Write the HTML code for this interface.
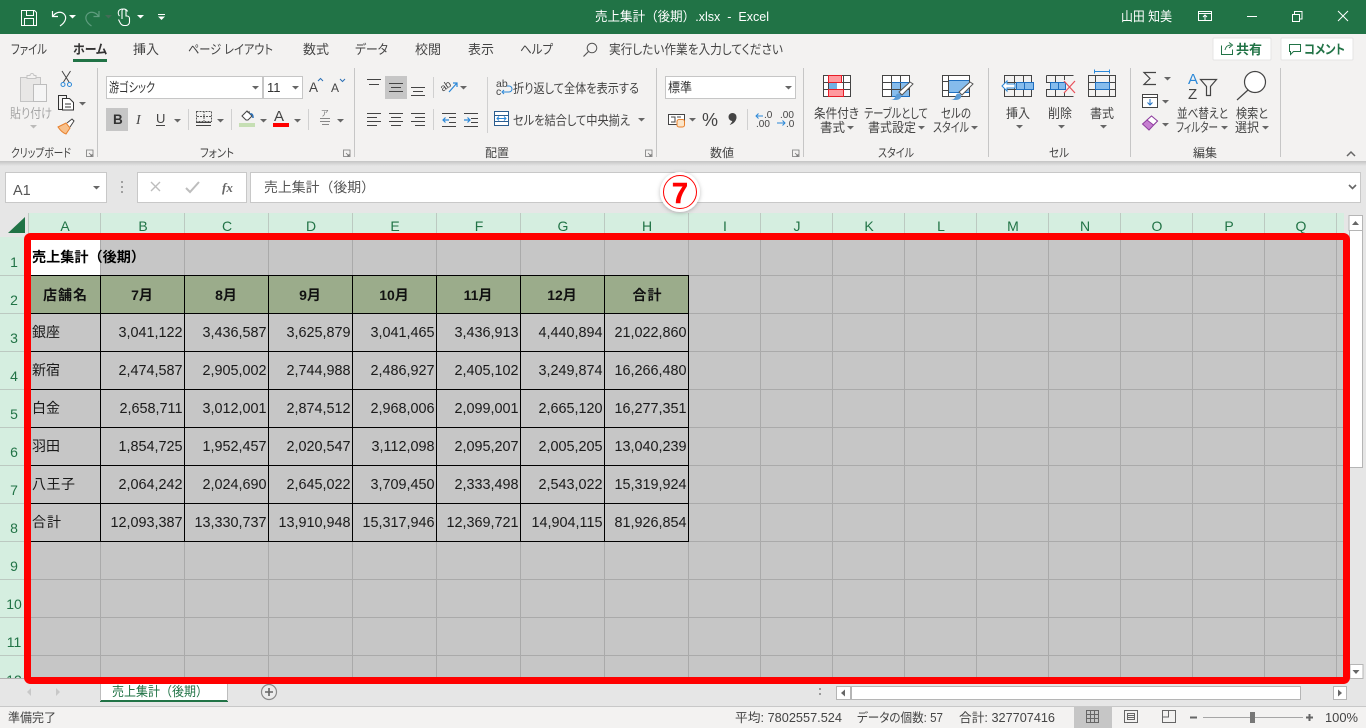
<!DOCTYPE html>
<html lang="ja"><head><meta charset="utf-8"><title>売上集計（後期）.xlsx - Excel</title>
<style>
html,body{margin:0;padding:0;background:#e6e6e6;width:1366px;height:728px;overflow:hidden}
svg{display:block;font-family:"Liberation Sans","Noto Sans CJK JP",sans-serif;font-feature-settings:"palt"}
.np{font-feature-settings:normal}
.r{font-size:13px;fill:#444}
.t{font-size:13px;fill:#444}
.g{font-size:12px;fill:#444}
.n{font-size:14.4px;fill:#1a1a1a;text-anchor:end}
.j{font-size:14px;fill:#1a1a1a}
.h{font-size:14px;fill:#111;font-weight:700;text-anchor:middle}
.c{font-size:14px;fill:#217346;text-anchor:middle}
.w{font-size:13px;fill:#fff}
.s{font-size:12.5px;fill:#444}
</style></head><body>
<svg width="1366" height="728" viewBox="0 0 1366 728" xmlns="http://www.w3.org/2000/svg">
<defs>
<path id="a" d="M0 0h7l-3.500 3.500z" fill="#666"/>
<path id="aw" d="M0 0h7l-3.500 3.500z" fill="#fff"/>
<filter id="sh" x="-40%" y="-40%" width="180%" height="180%"><feDropShadow dx="0" dy="1" stdDeviation="2" flood-color="#000" flood-opacity=".25"/></filter>
<linearGradient id="rs" x1="0" y1="0" x2="0" y2="1"><stop offset="0" stop-color="#c4c4c4"/><stop offset="1" stop-color="#e6e6e6"/></linearGradient>
</defs>

<!-- bands -->
<rect width="1366" height="728" fill="#e6e6e6"/>
<rect y="34" width="1366" height="127" fill="#f3f2f1"/>
<rect y="161" width="1366" height="5" fill="url(#rs)"/>
<rect width="1366" height="34" fill="#217346"/>

<!-- title bar -->
<g fill="none" stroke="#fff" stroke-width="1">
<path d="M21.500 10.500h13l2 2v13h-15zM26.500 10.500v5h7v-5M24.500 25.500v-7h9v7"/>
</g>
<path d="M52.500 11v5.500h5.500M53 16c3-4 8-5 11-2 3 3 2 8-4 12" fill="none" stroke="#fff" stroke-width="1.200"/>
<use href="#aw" x="69" y="15"/>
<path d="M99 11v5.500h-5.500M98.500 16c-3-4-8-5-11-2-3 3-2 8 4 12" fill="none" stroke="#5f9d7f" stroke-width="1.200"/>
<use href="#a" x="105" y="15" style="opacity:.5"/>
<path d="M122 19v-8a2 2 0 0 1 4 0v5h1a2.500 2.500 0 0 1 2.500 2.500v3.500a3.500 3.500 0 0 1-3.500 3.500h-2c-2 0-3-1-4-3l-1.500-3M119.500 16c-1-1-1.500-3-1-4.500.5-2 3-2.500 5-2.500s3.500 1 4 2.500" fill="none" stroke="#fff" stroke-width="1.100"/>
<use href="#aw" x="137" y="15"/>
<path d="M158 14.500h7" stroke="#fff"/><use href="#aw" x="158" y="16.500"/>
<text class="w np" x="595" y="21" textLength="174" lengthAdjust="spacingAndGlyphs">売上集計（後期）.xlsx&#160;&#160;-&#160;&#160;Excel</text>
<text class="w" x="1121" y="21" textLength="51" lengthAdjust="spacingAndGlyphs">山田 知美</text>
<g fill="none" stroke="#fff">
<path d="M1198.500 11.500h13v9h-13zM1198.500 13.500h13M1205 20v-5M1203 17l2-2 2 2"/>
<path d="M1247 16.500h10"/>
<path d="M1292.500 14.500h7v7h-7zM1294.500 14v-2.500h7.500v7.500h-2.500"/>
<path d="M1338 11l10 10M1348 11l-10 10"/>
</g>

<!-- tabs -->
<text class="t" x="11" y="54" textLength="36" lengthAdjust="spacingAndGlyphs">ファイル</text>
<text class="t" x="73" y="54" textLength="34" lengthAdjust="spacingAndGlyphs" font-weight="700" style="fill:#333">ホーム</text>
<rect x="73" y="59" width="34" height="3" fill="#217346"/>
<text class="t" x="133" y="54" textLength="26" lengthAdjust="spacingAndGlyphs">挿入</text>
<text class="t" x="188" y="54" textLength="85" lengthAdjust="spacingAndGlyphs">ページ レイアウト</text>
<text class="t" x="303" y="54" textLength="26" lengthAdjust="spacingAndGlyphs">数式</text>
<text class="t" x="355" y="54" textLength="33" lengthAdjust="spacingAndGlyphs">データ</text>
<text class="t" x="415" y="54" textLength="26" lengthAdjust="spacingAndGlyphs">校閲</text>
<text class="t" x="468" y="54" textLength="26" lengthAdjust="spacingAndGlyphs">表示</text>
<text class="t" x="520" y="54" textLength="33" lengthAdjust="spacingAndGlyphs">ヘルプ</text>
<circle cx="592" cy="48" r="4.800" fill="none" stroke="#555"/><path d="M588.500 51.500l-5 5" stroke="#555" stroke-width="1.200"/>
<text class="t" x="609" y="54" textLength="174" lengthAdjust="spacingAndGlyphs">実行したい作業を入力してください</text>

<rect x="1213" y="38" width="58" height="22" rx="1" fill="#fff" stroke="#e4e4e4"/>
<path d="M1221.500 45.500v9h11v-5M1225 50c1-4 3-5 6-5M1229 42.500l3.500 2.500-3.500 3" fill="none" stroke="#217346"/>
<text x="1236" y="54" font-size="13" font-weight="700" fill="#217346" textLength="26" lengthAdjust="spacingAndGlyphs">共有</text>
<rect x="1281" y="38" width="72" height="22" rx="1" fill="#fff" stroke="#e4e4e4"/>
<path d="M1289.500 44.500h11v7h-7l-3 3v-3h-1z" fill="none" stroke="#217346"/>
<text x="1304" y="54" font-size="13" font-weight="700" fill="#217346" textLength="41" lengthAdjust="spacingAndGlyphs">コメント</text>

<!-- group separators -->
<path d="M97.500 68v89M354.500 68v89M656.500 68v89M803.500 68v89M988.500 68v89M1130.500 68v89M1280.500 68v89" stroke="#c6c6c6"/>
<path d="M188.500 109v21M231.500 109v21M308.500 109v21M433.500 77v21M433.500 109v21M487.500 77v56M747.500 109v21" stroke="#d0d0d0"/>

<!-- group labels -->
<text class="g" x="11" y="157" textLength="60" lengthAdjust="spacingAndGlyphs">クリップボード</text>
<text class="g" x="200" y="157" textLength="34" lengthAdjust="spacingAndGlyphs">フォント</text>
<text class="g" x="485" y="157" textLength="24" lengthAdjust="spacingAndGlyphs">配置</text>
<text class="g" x="710" y="157" textLength="24" lengthAdjust="spacingAndGlyphs">数値</text>
<text class="g" x="878" y="157" textLength="36" lengthAdjust="spacingAndGlyphs">スタイル</text>
<text class="g" x="1049" y="157" textLength="20" lengthAdjust="spacingAndGlyphs">セル</text>
<text class="g" x="1193" y="157" textLength="24" lengthAdjust="spacingAndGlyphs">編集</text>
<g fill="none" stroke="#777" stroke-width=".8">
<path d="M86 150h7v7M86.500 150.500v6h6M89 153l3 3M90 156h2v-2"/>
<path d="M343 150h7v7M343.500 150.500v6h6M346 153l3 3M347 156h2v-2"/>
<path d="M645 150h7v7M645.500 150.500v6h6M648 153l3 3M649 156h2v-2"/>
<path d="M792 150h7v7M792.500 150.500v6h6M795 153l3 3M796 156h2v-2"/>
</g>
<path d="M1347 156l4-4 4 4" fill="none" stroke="#666" stroke-width="1.500"/>

<!-- clipboard -->
<path d="M20.500 77.500h20v24h-20z" fill="#e8e7e6" stroke="#c4c4c4"/>
<path d="M27 77.500v-2h3a2 2 0 0 1 4 0h2v3h-9z" fill="#f3f2f1" stroke="#c4c4c4"/>
<rect x="33.500" y="84.500" width="13" height="17" fill="#f5f5f5" stroke="#bdbdbd"/>
<text x="10" y="118" font-size="13" fill="#a6a6a6" textLength="42" lengthAdjust="spacingAndGlyphs">貼り付け</text>
<use href="#a" x="30" y="125" style="opacity:.4"/>
<path d="M62 71l7 11M70.500 71l-7 11" stroke="#444" fill="none"/>
<circle cx="63" cy="84.500" r="2" fill="none" stroke="#2b88d8"/><circle cx="69.500" cy="84.500" r="2" fill="none" stroke="#2b88d8"/>
<path d="M62.500 109.500h-4v-14h8v3" fill="none" stroke="#333"/>
<path d="M62.500 98.500h7l4 4v7.500h-11zM65 104h6M65 107h6" fill="#fff" stroke="#333" stroke-width="1"/>
<use href="#a" x="79" y="102"/>
<path d="M58 127l8-4 4 5-4 6c-3-1-6-4-8-7z" fill="#f8c08a" stroke="#e8802c"/>
<path d="M67 123l5-4 2 2-4 6" fill="#fff" stroke="#444"/>

<!-- font -->
<rect x="106.500" y="76.500" width="156" height="22" fill="#fff" stroke="#c6c6c6"/>
<rect x="263.500" y="76.500" width="39" height="22" fill="#fff" stroke="#c6c6c6"/>
<text x="109" y="92" font-size="13" fill="#333" textLength="46" lengthAdjust="spacingAndGlyphs">游ゴシック</text>
<text x="267" y="92" font-size="13" fill="#333">11</text>
<use href="#a" x="252" y="86"/><use href="#a" x="292" y="86"/>
<text x="309" y="92" font-size="13.500" fill="#444">A</text><path d="M318 81l2.500-2.500 2.500 2.500" fill="none" stroke="#2b6fb5"/>
<text x="331" y="92" font-size="12" fill="#444">A</text><path d="M340 79l2.500 2.500 2.500-2.500" fill="none" stroke="#2b6fb5"/>
<rect x="106" y="108" width="22" height="23" fill="#c6c6c6"/>
<text x="113" y="124" font-size="13.500" font-weight="700" fill="#333">B</text>
<text x="136" y="124" font-size="14" font-style="italic" fill="#444" font-family="Liberation Serif">I</text>
<text x="156" y="123" font-size="13" fill="#444">U</text><path d="M156 125.500h9" stroke="#444"/>
<use href="#a" x="174" y="119"/>
<path d="M196.500 111.500h15v10h-15zM204 111v10M197 116.500h14" fill="none" stroke="#555" stroke-dasharray="2 1"/>
<path d="M196 122.500h15M196 125.500h15" stroke="#444"/>
<use href="#a" x="217" y="119"/>
<path d="M242 116l5-5 5 5-4 4h-2zM247 112l3 0" fill="#fff" stroke="#444"/><path d="M250 114c3-1 3 3 3 4" fill="none" stroke="#2b6fb5" stroke-width="1.500"/>
<rect x="239" y="123" width="16" height="4" fill="#c6dfb4"/>
<use href="#a" x="260" y="119"/>
<text x="274" y="121" font-size="15" fill="#444">A</text>
<rect x="273" y="123" width="16" height="4" fill="#f00"/>
<use href="#a" x="294" y="119"/>
<text x="321" y="116" font-size="8" fill="#777">ア</text>
<path d="M320 118.500h10M320 121.500h10M322 124.500h7" stroke="#888"/>
<use href="#a" x="337" y="119"/>

<!-- alignment -->
<rect x="385" y="76" width="22" height="23" fill="#c6c6c6"/>
<g stroke="#444">
<path d="M367 79.500h14M369 84.500h10"/>
<path d="M389 83.500h14M391 87.500h10M389 91.500h14"/>
<path d="M411 87.500h14M413 91.500h10M411 95.500h14"/>
<path d="M367 113.500h14M367 117.500h10M367 121.500h14M367 125.500h10"/>
<path d="M389 113.500h14M391 117.500h10M389 121.500h14M391 125.500h10"/>
<path d="M411 113.500h14M415 117.500h10M411 121.500h14M415 125.500h10"/>
<path d="M442 113.500h14M449 117.500h7M449 122.500h7M442 126.500h14"/>
<path d="M464 113.500h14M471 118.500h7M471 122.500h7M464 126.500h14"/>
</g>
<path d="M449 120h-6M445.500 117.500l-2.500 2.500 2.500 2.500" fill="none" stroke="#2b88d8" stroke-width="1.200"/>
<path d="M464 120h6M467.500 117.500l2.500 2.500-2.500 2.500" fill="none" stroke="#2b88d8" stroke-width="1.200"/>
<text x="441" y="90" font-size="10" fill="#444" transform="rotate(-35 445 88)">ab</text>
<path d="M449 92l8-9M453 83h4v4" fill="none" stroke="#2b88d8" stroke-width="1.200"/>
<use href="#a" x="460" y="86"/>
<text x="496" y="87" font-size="10.500" fill="#444">ab</text><text x="496" y="95" font-size="10.500" fill="#444">c</text>
<path d="M503 92h6a2.500 2.500 0 0 0 0-6h-2M504 90l-2 2 2 2" fill="none" stroke="#2b88d8"/>
<text class="r" x="513" y="93" textLength="126" lengthAdjust="spacingAndGlyphs">折り返して全体を表示する</text>
<rect x="494.500" y="111.500" width="14" height="14" fill="#fff" stroke="#2a5d8f"/><path d="M495 115.500h14M495 121.500h14" stroke="#2a5d8f"/>
<path d="M497 118.500h9M499 116.500l-2 2 2 2M504 116.500l2 2-2 2" fill="none" stroke="#2b88d8"/>
<text class="r" x="513" y="125" textLength="117" lengthAdjust="spacingAndGlyphs">セルを結合して中央揃え</text>
<use href="#a" x="638" y="118"/>

<!-- number -->
<rect x="665.500" y="76.500" width="130" height="22" fill="#fff" stroke="#c6c6c6"/>
<text x="668" y="92" font-size="13" fill="#333" textLength="24" lengthAdjust="spacingAndGlyphs">標準</text>
<use href="#a" x="785" y="86"/>
<rect x="668.500" y="114.500" width="16" height="10" fill="#fff" stroke="#444"/>
<path d="M671 117h4v5h-4M677 117h4" fill="none" stroke="#444"/>
<rect x="677" y="119.500" width="7.500" height="7.500" rx="2" fill="#fbe5c9" stroke="#e8802c"/>
<use href="#a" x="689" y="118"/>
<text x="702" y="126" font-size="18" fill="#444">%</text>
<circle cx="732.500" cy="117" r="4" fill="#444"/><path d="M736.500 117c0 4-3 7-7 8 2-2 3-4 3-5z" fill="#444"/>
<text x="764" y="118" font-size="10" fill="#444">.0</text><text x="756" y="127" font-size="10" fill="#444">.00</text>
<path d="M763 116h-7M758.500 113.500l-2.500 2.500 2.500 2.500" fill="none" stroke="#2b88d8"/>
<text x="780" y="118" font-size="10" fill="#444">.00</text><text x="786" y="127" font-size="10" fill="#444">.0</text>
<path d="M777 123h8M782.500 120.500l2.500 2.500-2.500 2.500" fill="none" stroke="#2b88d8"/>

<!-- conditional -->
<rect x="824" y="76" width="26" height="20" fill="#fff"/>
<path d="M823.500 75.500h27v21h-27zM823.500 82.500h27M823.500 89.500h27M828.500 75v22M843.500 75v22" fill="none" stroke="#444"/>
<rect x="828.500" y="75.500" width="13" height="7" fill="#ff9a9f" stroke="#e61e28"/>
<rect x="829" y="83" width="8" height="6" fill="#74b1e5"/>
<rect x="828.500" y="89.500" width="15" height="7" fill="#ff9a9f" stroke="#e61e28"/>
<!-- table -->
<rect x="882" y="76" width="28" height="20" fill="#fff"/>
<rect x="892" y="82.500" width="18" height="14" fill="#86bcec"/>
<path d="M882.500 75.500h27v21h-27zM882.500 82.500h27M882.500 89.500h27M891.500 75v22M900.500 75v22" fill="none" stroke="#444"/>
<path d="M892 82.500h18M892 96.500h18" stroke="#1f6fc0"/>
<path d="M910 82l3 2-11 11-3-3z" fill="#fff" stroke="#555"/>
<path d="M890 100c4 0 5-2 6-5 1-2 4-2 5 0 1 3-2 5-5 5z" fill="#5b9bd5"/>
<!-- cell style -->
<rect x="942" y="76" width="28" height="20" fill="#fff"/>
<rect x="948.500" y="80.500" width="21" height="12" fill="#86bcec" stroke="#1f6fc0"/>
<path d="M942.500 75.500h27v21h-27zM948.500 75v22M942.500 81.500h6M942.500 90.500h6" fill="none" stroke="#444"/>
<path d="M970 82l3 2-11 11-3-3z" fill="#fff" stroke="#555"/>
<path d="M950 100c4 0 5-2 6-5 1-2 4-2 5 0 1 3-2 5-5 5z" fill="#5b9bd5"/>
<text class="r" x="814" y="118" textLength="45" lengthAdjust="spacingAndGlyphs">条件付き</text>
<text class="r" x="820" y="132" textLength="25" lengthAdjust="spacingAndGlyphs">書式</text><use href="#a" x="847" y="126" />
<text class="r" x="864" y="118" textLength="64" lengthAdjust="spacingAndGlyphs">テーブルとして</text>
<text class="r" x="868" y="132" textLength="48" lengthAdjust="spacingAndGlyphs">書式設定</text><use href="#a" x="918" y="126"/>
<text class="r" x="941" y="118" textLength="30" lengthAdjust="spacingAndGlyphs">セルの</text>
<text class="r" x="933" y="132" textLength="36" lengthAdjust="spacingAndGlyphs">スタイル</text><use href="#a" x="971" y="126"/>

<!-- cells group -->
<g fill="none" stroke="#444">
<path d="M1004.500 75.500h27v21h-27zM1004.500 82.500h27M1004.500 89.500h27M1014.500 75v21M1023.500 75v21"/>
<path d="M1046.500 75.500h27M1046.500 96.500h27M1046.500 75.500v7M1046.500 89.500v7M1046 82.500h5M1046 89.500h5M1055.500 75v7M1064.500 75v5M1055.500 90v7M1064.500 92v5"/>
<path d="M1088.500 75.500h27v21h-27zM1088.500 82.500h27M1088.500 89.500h27M1095.500 75v22M1109.500 75v22"/>
</g>
<rect x="1016.500" y="82.500" width="17" height="7" fill="#86bcec" stroke="#1f6fc0"/><path d="M1024.500 82v8" stroke="#1f6fc0"/>
<path d="M1002 86l5-5v3h8v4h-8v3z" fill="#fff" stroke="#2b88d8"/>
<rect x="1050.500" y="82.500" width="15" height="7" fill="#86bcec" stroke="#1f6fc0"/><path d="M1058.500 82v8" stroke="#1f6fc0"/>
<path d="M1064 81l11 12M1075 81l-11 12" stroke="#e8505a" stroke-width="1.200"/>
<path d="M1094 71.500h16M1094.500 69.500v4M1109.500 69.500v4" stroke="#2b88d8"/>
<rect x="1095.500" y="82.500" width="14" height="7" fill="#86bcec" stroke="#1f6fc0"/>
<text class="r" x="1006" y="118" textLength="24" lengthAdjust="spacingAndGlyphs">挿入</text><use href="#a" x="1016" y="125"/>
<text class="r" x="1048" y="118" textLength="24" lengthAdjust="spacingAndGlyphs">削除</text><use href="#a" x="1058" y="125"/>
<text class="r" x="1090" y="118" textLength="24" lengthAdjust="spacingAndGlyphs">書式</text><use href="#a" x="1100" y="125"/>

<!-- edit -->
<path d="M1156 72.500h-12l6 6-6 6h12" fill="none" stroke="#444" stroke-width="1.200"/>
<use href="#a" x="1164" y="77"/>
<rect x="1142.500" y="94.500" width="15" height="13" fill="#fff" stroke="#444"/><path d="M1142 97.500h16" stroke="#444"/>
<path d="M1150 99v6M1147.500 102.500l2.500 2.500 2.500-2.500" fill="none" stroke="#1f6fc0"/>
<use href="#a" x="1162" y="100"/>
<path d="M1142.500 124l9-8 6 5-8.500 9z" fill="#c67fd1" stroke="#8f3f9f"/><path d="M1147 120l4.500-4 6 5-4 4z" fill="#fff" stroke="#8f3f9f"/>
<use href="#a" x="1162" y="123"/>
<text x="1188" y="84" font-size="15" fill="#2b88d8">A</text>
<text x="1188" y="99" font-size="15" fill="#444">Z</text>
<path d="M1200.500 79.500h16l-6 7v9h-4v-9z" fill="none" stroke="#444" stroke-width="1.200"/>
<circle cx="1255" cy="82" r="10.500" fill="#fff" stroke="#444" stroke-width="1.200"/>
<path d="M1248 90l-11 10" stroke="#444" stroke-width="1.200"/>
<text class="r" x="1177" y="118" textLength="51" lengthAdjust="spacingAndGlyphs">並べ替えと</text>
<text class="r" x="1176" y="132" textLength="42" lengthAdjust="spacingAndGlyphs">フィルター</text><use href="#a" x="1221" y="126"/>
<text class="r" x="1236" y="118" textLength="32" lengthAdjust="spacingAndGlyphs">検索と</text>
<text class="r" x="1235" y="132" textLength="24" lengthAdjust="spacingAndGlyphs">選択</text><use href="#a" x="1262" y="126"/>

<!-- formula bar -->
<rect x="5.500" y="172.500" width="101" height="30" fill="#fff" stroke="#c8c8c8"/>
<text x="13" y="195" font-size="14.500" fill="#555">A1</text>
<use href="#a" x="93" y="186"/>
<path d="M122 181v2M122 186v2M122 191v2" stroke="#a0a0a0" stroke-width="2"/>
<rect x="137.500" y="172.500" width="109" height="30" fill="#fff" stroke="#c8c8c8"/>
<path d="M151 182l9 9M160 182l-9 9" stroke="#bdbdbd" stroke-width="1.400"/>
<path d="M186 188l4 4 9-10" fill="none" stroke="#bdbdbd" stroke-width="2"/>
<text x="222" y="192" font-size="13" font-style="italic" font-weight="700" font-family="Liberation Serif" fill="#666">fx</text>
<rect x="250.500" y="172.500" width="1110" height="30" fill="#fff" stroke="#c8c8c8"/>
<text class="np" x="264" y="192" font-size="13.500" fill="#555" textLength="111" lengthAdjust="spacingAndGlyphs">売上集計（後期）</text>
<path d="M1349 185l3.500 3.500 3.500-3.500" fill="none" stroke="#666" stroke-width="1.600"/>

<!-- headers -->
<rect x="0" y="213" width="1344" height="25" fill="#d5eee0"/>
<rect x="0" y="238" width="29" height="440" fill="#d5eee0"/>
<rect x="0" y="213" width="29" height="24" fill="#e6e6e6"/>
<path d="M8 233L25 217V233z" fill="#217346"/>
<path d="M28.500 213v24M100.500 213v24M184.500 213v24M268.500 213v24M352.500 213v24M436.500 213v24M520.500 213v24M604.500 213v24M688.500 213v24M760.500 213v24M832.500 213v24M904.500 213v24M976.500 213v24M1048.500 213v24M1120.500 213v24M1192.500 213v24M1264.500 213v24M1336.500 213v24" stroke="#bcc9c1"/>
<text class="c" x="65" y="231">A</text><text class="c" x="143" y="231">B</text><text class="c" x="227" y="231">C</text><text class="c" x="311" y="231">D</text><text class="c" x="395" y="231">E</text><text class="c" x="479" y="231">F</text><text class="c" x="563" y="231">G</text><text class="c" x="647" y="231">H</text><text class="c" x="725" y="231">I</text><text class="c" x="797" y="231">J</text><text class="c" x="869" y="231">K</text><text class="c" x="941" y="231">L</text><text class="c" x="1013" y="231">M</text><text class="c" x="1085" y="231">N</text><text class="c" x="1157" y="231">O</text><text class="c" x="1229" y="231">P</text><text class="c" x="1301" y="231">Q</text>
<text class="c" x="14" y="267">1</text><text class="c" x="14" y="305">2</text><text class="c" x="14" y="343">3</text><text class="c" x="14" y="381">4</text><text class="c" x="14" y="419">5</text><text class="c" x="14" y="457">6</text><text class="c" x="14" y="495">7</text><text class="c" x="14" y="533">8</text><text class="c" x="14" y="571">9</text><text class="c" x="14" y="609">10</text><text class="c" x="14" y="647">11</text><text class="c" x="14" y="685">12</text>
<path d="M0 275.500h24M0 313.500h24M0 351.500h24M0 389.500h24M0 427.500h24M0 465.500h24M0 503.500h24M0 541.500h24M0 579.500h24M0 617.500h24M0 655.500h24" stroke="#bcc9c1"/>
<rect x="0" y="678" width="24" height="6" fill="#e6e6e6"/>
<path d="M0 678.500h24" stroke="#b0b0b0"/>

<!-- cells -->
<rect x="29" y="238" width="1315" height="446" fill="#c6c6c6"/>
<path d="M100.500 238V684M184.500 238V684M268.500 238V684M352.500 238V684M436.500 238V684M520.500 238V684M604.500 238V684M688.500 238V684M760.500 238V684M832.500 238V684M904.500 238V684M976.500 238V684M1048.500 238V684M1120.500 238V684M1192.500 238V684M1264.500 238V684M1336.500 238V684M29 275.500H1344M29 313.500H1344M29 351.500H1344M29 389.500H1344M29 427.500H1344M29 465.500H1344M29 503.500H1344M29 541.500H1344M29 579.500H1344M29 617.500H1344M29 655.500H1344" stroke="#aaa"/>
<rect x="29" y="238" width="71" height="37" fill="#fff"/>
<rect x="29" y="276" width="660" height="37" fill="#9bac8b"/>
<path d="M100.500 275V542M184.500 275V542M268.500 275V542M352.500 275V542M436.500 275V542M520.500 275V542M604.500 275V542M688.500 275V542M29 275.500H689M29 313.500H689M29 351.500H689M29 389.500H689M29 427.500H689M29 465.500H689M29 503.500H689M29 541.500H689" stroke="#000"/>

<text class="np" x="32" y="262" font-size="14" font-weight="700" fill="#000" textLength="113" lengthAdjust="spacingAndGlyphs">売上集計（後期）</text>
<text class="h" x="65" y="300" textLength="44" lengthAdjust="spacing">店舗名</text><text class="h" x="142" y="300">7月</text><text class="h" x="226" y="300">8月</text><text class="h" x="310" y="300">9月</text><text class="h" x="394" y="300">10月</text><text class="h" x="478" y="300">11月</text><text class="h" x="562" y="300">12月</text><text class="h" x="647" y="300" textLength="29" lengthAdjust="spacing">合計</text>

<text class="j" x="32" y="337" textLength="28" lengthAdjust="spacing">銀座</text>
<text class="n" x="182.500" y="337">3,041,122</text><text class="n" x="266.500" y="337">3,436,587</text><text class="n" x="350.500" y="337">3,625,879</text><text class="n" x="434.500" y="337">3,041,465</text><text class="n" x="518.500" y="337">3,436,913</text><text class="n" x="602.500" y="337">4,440,894</text><text class="n" x="686.500" y="337">21,022,860</text>
<text class="j" x="32" y="375" textLength="28" lengthAdjust="spacing">新宿</text>
<text class="n" x="182.500" y="375">2,474,587</text><text class="n" x="266.500" y="375">2,905,002</text><text class="n" x="350.500" y="375">2,744,988</text><text class="n" x="434.500" y="375">2,486,927</text><text class="n" x="518.500" y="375">2,405,102</text><text class="n" x="602.500" y="375">3,249,874</text><text class="n" x="686.500" y="375">16,266,480</text>
<text class="j" x="32" y="413" textLength="28" lengthAdjust="spacing">白金</text>
<text class="n" x="182.500" y="413">2,658,711</text><text class="n" x="266.500" y="413">3,012,001</text><text class="n" x="350.500" y="413">2,874,512</text><text class="n" x="434.500" y="413">2,968,006</text><text class="n" x="518.500" y="413">2,099,001</text><text class="n" x="602.500" y="413">2,665,120</text><text class="n" x="686.500" y="413">16,277,351</text>
<text class="j" x="32" y="451" textLength="28" lengthAdjust="spacing">羽田</text>
<text class="n" x="182.500" y="451">1,854,725</text><text class="n" x="266.500" y="451">1,952,457</text><text class="n" x="350.500" y="451">2,020,547</text><text class="n" x="434.500" y="451">3,112,098</text><text class="n" x="518.500" y="451">2,095,207</text><text class="n" x="602.500" y="451">2,005,205</text><text class="n" x="686.500" y="451">13,040,239</text>
<text class="j" x="32" y="489" textLength="43" lengthAdjust="spacing">八王子</text>
<text class="n" x="182.500" y="489">2,064,242</text><text class="n" x="266.500" y="489">2,024,690</text><text class="n" x="350.500" y="489">2,645,022</text><text class="n" x="434.500" y="489">3,709,450</text><text class="n" x="518.500" y="489">2,333,498</text><text class="n" x="602.500" y="489">2,543,022</text><text class="n" x="686.500" y="489">15,319,924</text>
<text class="j" x="32" y="527" textLength="29" lengthAdjust="spacing">合計</text>
<text class="n" x="182.500" y="527">12,093,387</text><text class="n" x="266.500" y="527">13,330,737</text><text class="n" x="350.500" y="527">13,910,948</text><text class="n" x="434.500" y="527">15,317,946</text><text class="n" x="518.500" y="527">12,369,721</text><text class="n" x="602.500" y="527">14,904,115</text><text class="n" x="686.500" y="527">81,926,854</text>

<!-- vertical scrollbar -->
<rect x="1344" y="213" width="22" height="471" fill="#e6e6e6"/>
<rect x="1349" y="215.500" width="13.500" height="15" fill="#fff" stroke="#b5b5b5"/>
<path d="M1352 225l3.500-4 3.500 4z" fill="#666"/>
<rect x="1349" y="231" width="14" height="236" fill="#fff"/>
<path d="M1349.500 231v236M1362.500 231v236M1349 467.500h14" stroke="#b5b5b5"/>
<rect x="1350" y="664.500" width="13" height="14" fill="#fff" stroke="#b5b5b5"/>
<path d="M1352.500 670l3.500 4 3.500-4z" fill="#666"/>

<!-- sheet tabs -->
<rect x="0" y="684" width="1366" height="22" fill="#e6e6e6"/>
<path d="M31 688l-4 4 4 4zM56 688l4 4-4 4z" fill="#c8c8c8"/>
<rect x="100" y="684" width="128" height="18" fill="#fff"/>
<rect x="100" y="700" width="128" height="2" fill="#217346"/>
<path d="M100.500 684v17M227.500 684v17" stroke="#bdbdbd"/>
<text class="np" x="112" y="696" font-size="13" fill="#217346" textLength="96" lengthAdjust="spacingAndGlyphs">売上集計（後期）</text>
<circle cx="269" cy="692" r="7.500" fill="#ececec" stroke="#8a8a8a" stroke-width="1.200"/>
<path d="M265 692h8M269 688v8" stroke="#666" stroke-width="1.600"/>
<path d="M820 688v2M820 693v2" stroke="#9a9a9a" stroke-width="2"/>
<rect x="836.500" y="686.500" width="14" height="13" fill="#fff" stroke="#b5b5b5"/>
<path d="M845 689.500l-4 3.500 4 3.500z" fill="#666"/>
<rect x="851.500" y="686.500" width="449" height="13" fill="#fff" stroke="#b5b5b5"/>
<rect x="1333.500" y="686.500" width="13" height="13" fill="#fff" stroke="#b5b5b5"/>
<path d="M1338 689.500l4 3.500-4 3.500z" fill="#666"/>

<!-- status bar -->
<rect x="0" y="706" width="1366" height="22" fill="#f3f2f1"/>
<path d="M0 706.500h1366" stroke="#c8c8c8"/>
<text class="s" x="8" y="722" textLength="48" lengthAdjust="spacingAndGlyphs">準備完了</text>
<text class="s" x="735" y="722" textLength="107" lengthAdjust="spacingAndGlyphs">平均: 7802557.524</text>
<text class="s" x="857" y="722" textLength="86" lengthAdjust="spacingAndGlyphs">データの個数: 57</text>
<text class="s" x="959" y="722" textLength="96" lengthAdjust="spacingAndGlyphs">合計: 327707416</text>
<rect x="1074" y="707" width="38" height="21" fill="#c6c6c6"/>
<path d="M1086.500 710.500h12v12h-12zM1086.500 714.500h12M1086.500 718.500h12M1090.500 710v12M1094.500 710v12" fill="none" stroke="#666"/>
<path d="M1124.500 710.500h13v12h-13zM1127.500 713.500h7v6h-7zM1128 715.500h6M1128 717.500h6" fill="none" stroke="#666"/>
<path d="M1162.500 710.500h13v12h-13zM1168.500 710v7h-6" fill="none" stroke="#666"/>
<path d="M1190 717.500h7M1306 717.500h7M1309.500 714v7" stroke="#666" stroke-width="2"/>
<path d="M1203 717.500h100" stroke="#a6a6a6"/>
<rect x="1250" y="712" width="5" height="11" fill="#777"/>
<text class="s" x="1325" y="722" textLength="33" lengthAdjust="spacingAndGlyphs">100%</text>

<!-- red frame -->
<rect x="27.500" y="236.500" width="1319" height="444" rx="3" fill="none" stroke="#f00" stroke-width="7"/>

<!-- badge -->
<circle cx="680" cy="192" r="20" fill="#fff" filter="url(#sh)"/>
<circle cx="680" cy="192" r="16.500" fill="#fff" stroke="#f00" stroke-width="1"/>
<text x="680" y="203" font-size="29" font-weight="700" fill="#f00" stroke="#f00" stroke-width=".5" text-anchor="middle">7</text>
</svg>
</body></html>
